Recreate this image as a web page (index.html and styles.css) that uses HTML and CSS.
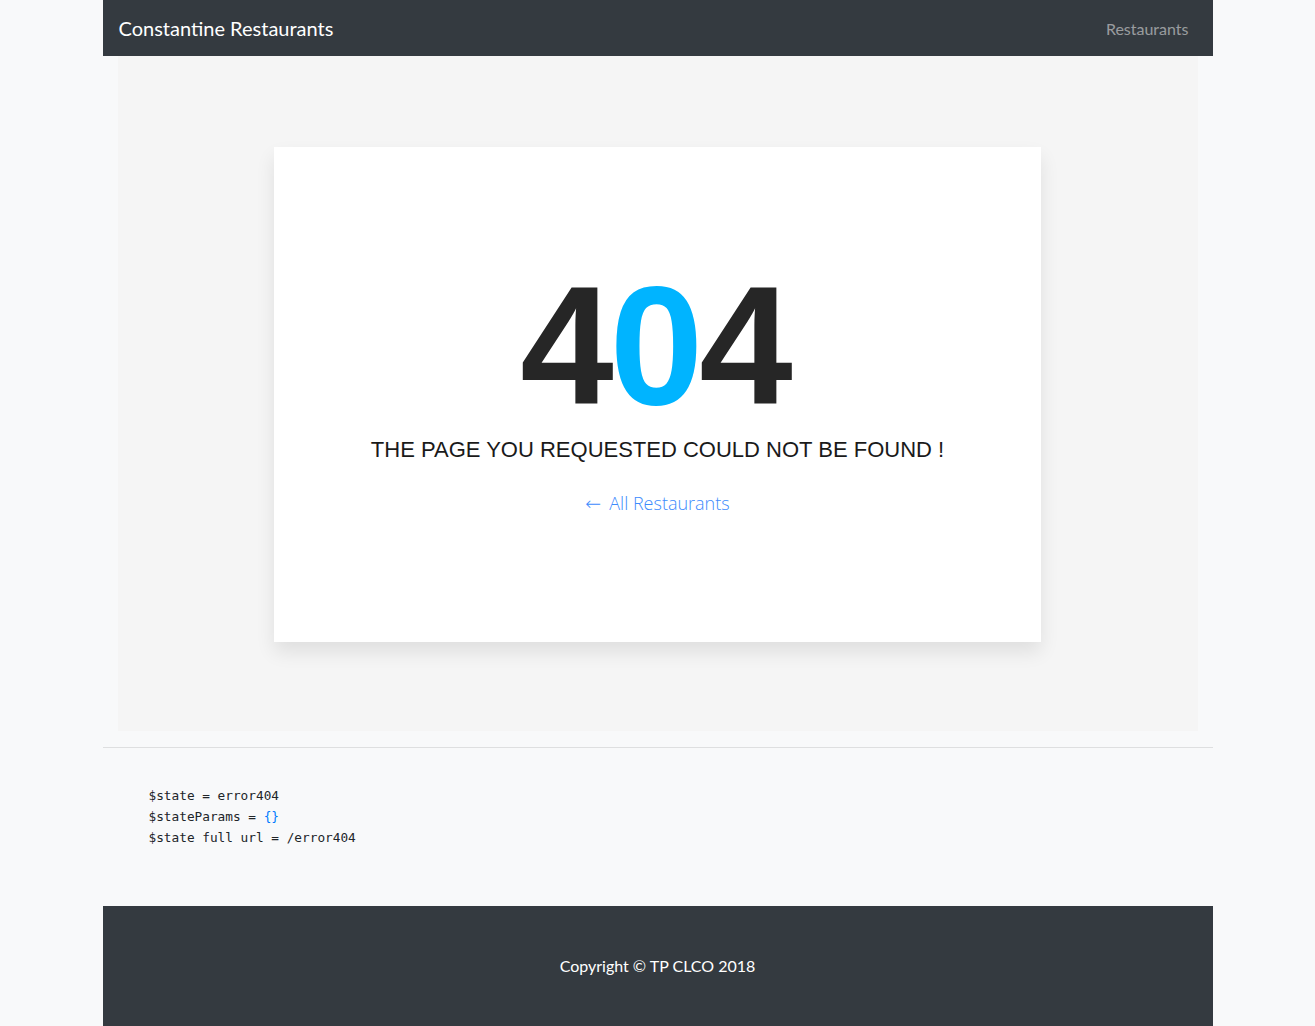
FILE: index.html
```html
<!DOCTYPE html>
<html lang="en">
<head>
<meta charset="utf-8">
<title>Constantine Restaurants</title>
<link rel="stylesheet" href="styles.css">
</head>
<body>
<div class="container">
  <nav class="navbar">
    <a class="brand" href="#">Constantine Restaurants</a>
    <a class="nav-link" href="#">Restaurants</a>
  </nav>
  <main class="main">
    <div class="panel">
      <div class="card">
        <div class="code404"><span>4</span><span class="zero">0</span><span>4</span></div>
        <h2 class="msg">THE PAGE YOU REQUESTED COULD NOT BE FOUND !</h2>
        <a class="back" href="#"><span class="arrow">←</span><span>All Restaurants</span></a>
      </div>
    </div>
  </main>
  <hr class="sep">
  <div class="debug">
    <div class="line">$state = error404</div>
    <div class="line">$stateParams = <span class="obj">{}</span></div>
    <div class="line">$state full url = /error404</div>
  </div>
  <footer class="footer">Copyright © TP CLCO 2018</footer>
</div>
</body>
</html>
```
FILE: styles.css
```css
html, body {
  margin: 0;
  padding: 0;
}
body {
  background: #f8f9fa;
  font-family: Lato, "Open Sans", sans-serif;
  color: #212529;
}
.container {
  width: 1110px;
  margin: 0 auto;
}
.navbar {
  height: 56px;
  background: #343a40;
  padding: 0 24px 0 16px;
  display: flex;
  align-items: center;
  justify-content: space-between;
  box-sizing: border-box;
}
.brand {
  color: #fff;
  font-size: 20px;
  text-decoration: none;
}
.nav-link {
  color: rgba(255,255,255,0.5);
  font-size: 16px;
  text-decoration: none;
}
.main {
  padding: 0 15px;
}
.panel {
  background: #f5f5f5;
  padding: 91px 0 89px;
}
.card {
  width: 767px;
  height: 495px;
  margin: 0 auto;
  background: #fff;
  box-shadow: 0 10px 18px rgba(0,0,0,0.09);
  display: flex;
  flex-direction: column;
  align-items: center;
  box-sizing: border-box;
  padding-top: 115px;
}
.code404 {
  font-family: "Liberation Sans", Arial, sans-serif;
  font-weight: 700;
  font-size: 168px;
  line-height: 1;
  color: #262626;
  letter-spacing: -4px;
  margin-right: 6px;
}
.code404 .zero {
  color: #00b4ff;
}
.msg {
  font-family: "Liberation Sans", Arial, sans-serif;
  font-weight: 400;
  font-size: 22px;
  line-height: 30px;
  margin: 5px 0 0;
  color: #1a1a1a;
}
.back {
  margin-top: 24px;
  display: flex;
  align-items: center;
  gap: 8px;
  font-family: "Open Sans", sans-serif;
  font-weight: 300;
  font-size: 18px;
  line-height: 28px;
  color: #3d8bfd;
  text-decoration: none;
}
.back .arrow {
  font-family: "DejaVu Sans", sans-serif;
  font-weight: 200;
  font-size: 19px;
  line-height: 28px;
}
.sep {
  margin: 16px 0 0;
  border: 0;
  border-top: 1px solid rgba(0,0,0,0.1);
}
.debug {
  padding: 37px 46px 58px;
  font-family: "DejaVu Sans Mono", monospace;
  font-size: 12.75px;
  line-height: 21px;
  color: #212529;
}
.debug .line {
  white-space: pre;
}
.debug .obj {
  color: #007bff;
}
.footer {
  background: #343a40;
  color: #fff;
  text-align: center;
  font-size: 16px;
  line-height: 24px;
  padding: 48px 0;
}
```
